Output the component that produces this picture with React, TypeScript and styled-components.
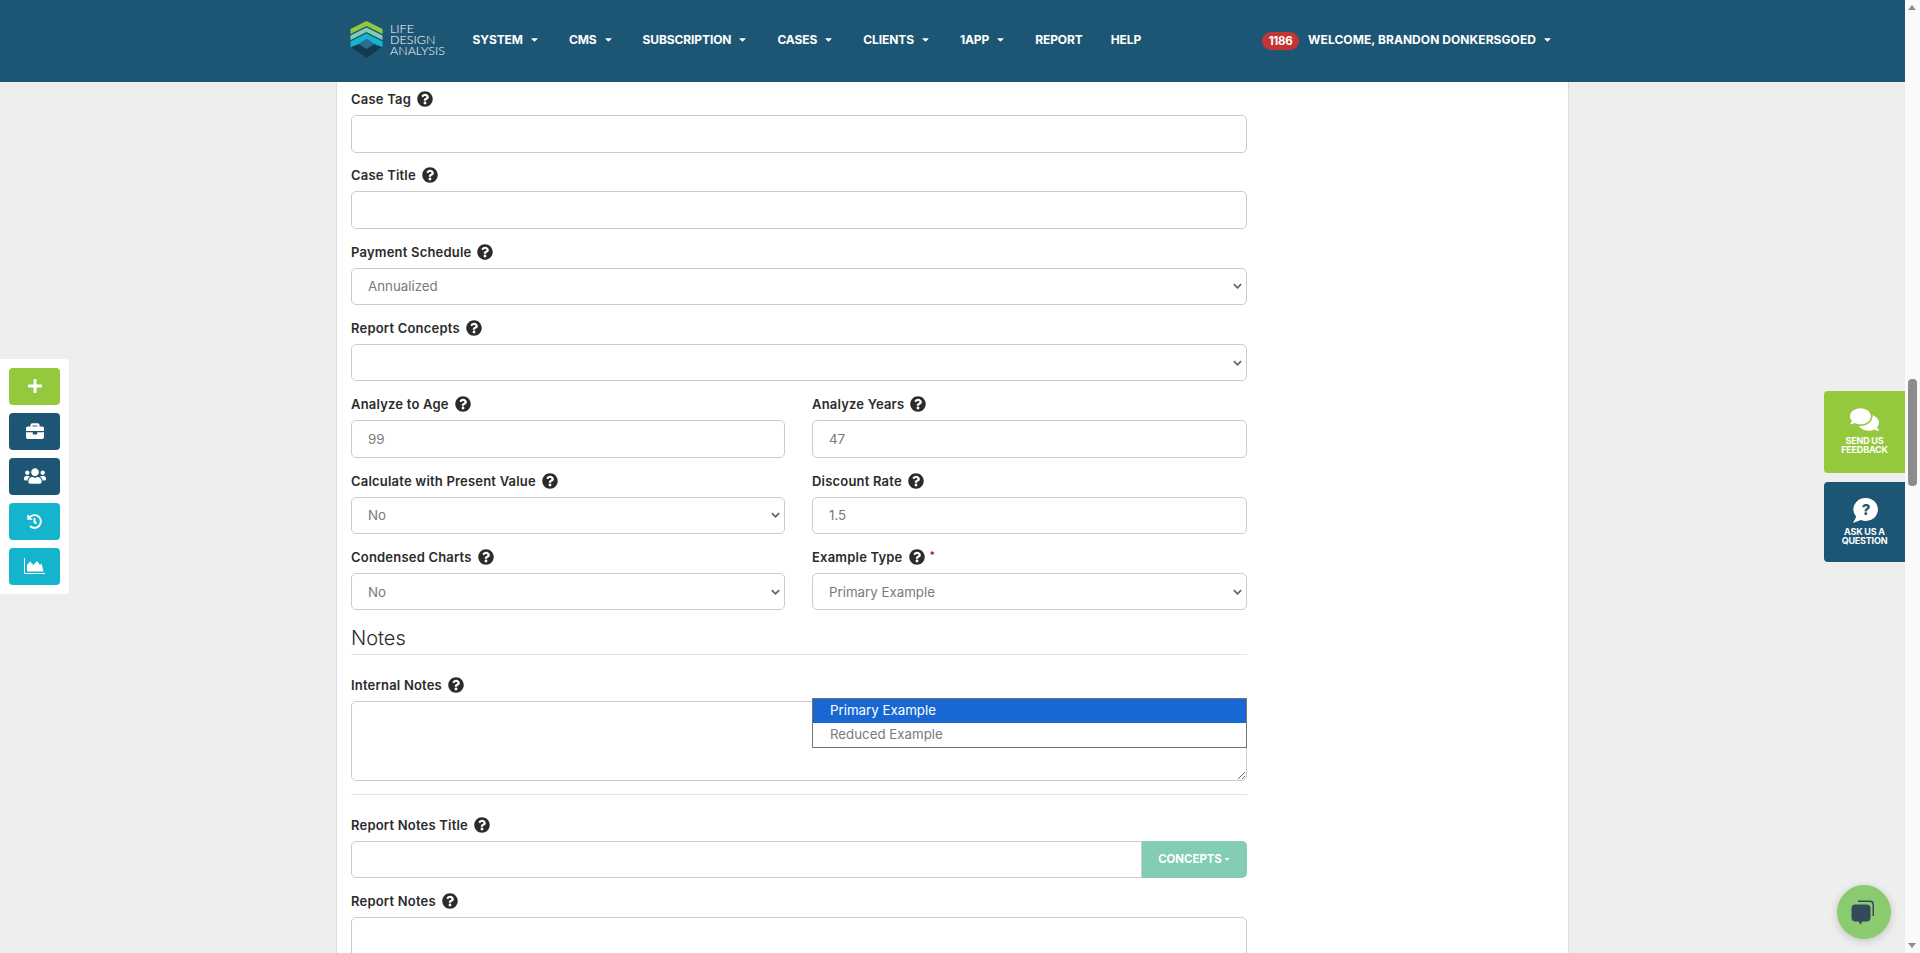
import React from 'react'
import styled, { createGlobalStyle } from 'styled-components'
import {
    FaBriefcase,
    FaCaretDown,
    FaComments,
    FaHistory,
    FaPlus,
    FaQuestionCircle,
    FaUsers,
} from 'react-icons/fa'

const FONT = `Inter, "Liberation Sans", sans-serif`
const CHEVRON = `url("data:image/svg+xml,%3Csvg xmlns='http://www.w3.org/2000/svg' width='9' height='6' viewBox='0 0 10 6'%3E%3Cpath d='M1 1l4 4 4-4' fill='none' stroke='%23666' stroke-width='2'/%3E%3C/svg%3E")`

const GlobalStyle = createGlobalStyle`
    html, body {
        margin: 0;
        height: 100%;
        overflow: hidden;
        background: #eeeeee;
        font-family: ${FONT};
    }
    * {
        box-sizing: border-box;
    }
`
const Page = styled.div`
    display: flex;
    height: 100vh;
    overflow: hidden;
`
const Main = styled.div`
    position: relative;
    flex: 1;
    min-width: 0;
    overflow: hidden;
`
const Header = styled.header`
    height: 82px;
    background: #1d5674;
`
const HeaderInner = styled.div`
    display: flex;
    align-items: center;
    width: 1233px;
    height: 100%;
    margin: 0 auto;
    padding-left: 14px;
`
const Logo = styled.div`
    display: flex;
    align-items: center;
    gap: 7px;
    width: 108.5px;
    margin-bottom: 3px;
`
const LogoText = styled.div`
    font-family: Lato, sans-serif;
    font-size: 12.5px;
    font-weight: 300;
    line-height: 11px;
    color: #ffffff;
`
const NavItem = styled.a`
    display: flex;
    align-items: center;
    gap: 6px;
    padding: 0 14px;
    margin-bottom: 4px;
    font-size: 12px;
    font-weight: 700;
    letter-spacing: -0.1px;
    color: #ffffff;
    white-space: nowrap;
`
const NavCaret = styled(FaCaretDown)`
    margin-right: 1px;
`
const UserMenu = styled.div`
    display: flex;
    align-items: center;
    margin-left: auto;
`
const Badge = styled.span`
    display: flex;
    align-items: center;
    justify-content: center;
    width: 37px;
    height: 18px;
    border-radius: 9px;
    background: #c53434;
    font-size: 11.5px;
    font-weight: 700;
    letter-spacing: -0.3px;
    color: #ffffff;
`
const UserLink = styled(NavItem)`
    padding: 0 15px 0 9px;
    letter-spacing: 0.07px;
`
const Panel = styled.div`
    width: 1233px;
    height: 871px;
    margin: 0 auto;
    padding: 7px 14px 0;
    background: #ffffff;
    border-left: 1px solid #dddddd;
    border-right: 1px solid #dddddd;
`
const Form = styled.form`
    width: 896px;
`
const Field = styled.div`
    position: relative;
    min-width: 0;
    margin-bottom: 12.83px;
`
const Columns = styled.div`
    display: grid;
    grid-template-columns: 434px 435px;
    column-gap: 27px;
`
const Label = styled.label`
    display: flex;
    align-items: center;
    gap: 6px;
    height: 20px;
    margin-bottom: 6px;
    font-size: 13px;
    font-weight: 600;
    letter-spacing: 0.2px;
    color: #2b2b2b;
`
const Required = styled.span`
    margin: -3px 0 0 -1px;
    font-size: 10px;
    color: #a0152c;
`
const controlStyles = `
    display: block;
    width: 100%;
    height: 37.5px;
    padding: 0 16px;
    border: 1px solid #cccccc;
    border-radius: 5px;
    outline: none;
    background-color: #ffffff;
    font-family: ${FONT};
    font-size: 13.3px;
    color: #7a7a7a;
`
const Input = styled.input`
    ${controlStyles}
`
const Select = styled.select`
    ${controlStyles}
    appearance: none;
    background-image: ${CHEVRON};
    background-repeat: no-repeat;
    background-position: right 4.5px center;
`
const TextArea = styled.textarea<{ $height: number }>`
    ${controlStyles}
    height: ${(p) => p.$height}px;
    resize: vertical;
`
const SectionTitle = styled.h4`
    height: 32px;
    margin: 0 0 20px;
    border-bottom: 1px solid #e2e2e2;
    font-size: 20px;
    font-weight: 300;
    line-height: 30px;
    color: #2b2b2b;
`
const Rule = styled.hr`
    height: 1px;
    margin: 0 0 20px;
    border: 0;
    background: #e2e2e2;
`
const OptionList = styled.div`
    position: absolute;
    top: 151px;
    left: 0;
    right: 0;
    z-index: 2;
    border: 1px solid #767676;
    background: #ffffff;
`
const Option = styled.div<{ $selected?: boolean }>`
    height: 24px;
    padding-left: 17px;
    font-size: 13.3px;
    line-height: 23px;
    color: ${(p) => (p.$selected ? '#ffffff' : '#7a7a7a')};
    background: ${(p) => (p.$selected ? '#1967d2' : 'transparent')};
`
const InputGroup = styled.div`
    display: flex;
`
const GroupInput = styled(Input)`
    flex: 1;
    border-radius: 5px 0 0 5px;
`
const ConceptsButton = styled.button`
    display: flex;
    align-items: center;
    justify-content: center;
    gap: 1px;
    width: 105px;
    padding: 0;
    border: 0;
    border-radius: 0 5px 5px 0;
    background: #82cdb3;
    font-family: ${FONT};
    font-size: 11.4px;
    font-weight: 700;
    color: #ffffff;
`
const ToolDock = styled.div`
    position: absolute;
    top: 359px;
    left: 0;
    display: flex;
    flex-direction: column;
    gap: 8.5px;
    width: 69px;
    padding: 9px;
    border-radius: 0 4px 4px 0;
    background: #ffffff;
`
const ToolButton = styled.button<{ $color: string }>`
    display: flex;
    align-items: center;
    justify-content: center;
    width: 51px;
    height: 36.5px;
    padding: 0;
    border: 0;
    border-radius: 4px;
    background: ${(p) => p.$color};
    color: #ffffff;
    font-size: 18px;
`
const SideTabs = styled.div`
    position: absolute;
    top: 391px;
    right: 0;
    display: flex;
    flex-direction: column;
    gap: 9.5px;
    width: 81px;
`
const SideTab = styled.div<{ $color: string; $height: number }>`
    display: flex;
    flex-direction: column;
    align-items: center;
    height: ${(p) => p.$height}px;
    padding-top: 16px;
    border-radius: 4px 0 0 4px;
    background: ${(p) => p.$color};
    color: #ffffff;
    font-size: 9px;
    font-weight: 700;
    line-height: 9px;
    letter-spacing: -0.2px;
    text-align: center;
`
const TabIcon = styled.span`
    display: flex;
    align-items: center;
    justify-content: center;
    height: 25px;
    margin-bottom: 4px;
    font-size: 29px;
`
const ChatBubble = styled.div`
    position: absolute;
    right: 14px;
    bottom: 14px;
    display: flex;
    align-items: center;
    justify-content: center;
    width: 54px;
    height: 54px;
    border-radius: 50%;
    background: #8acb70;
    box-shadow: 0 2px 8px rgba(0, 0, 0, 0.18);
`
const ScrollTrack = styled.div`
    position: relative;
    flex: 0 0 15px;
    background: #fafafa;
`
const ScrollThumb = styled.div`
    position: absolute;
    top: 379px;
    left: 3px;
    width: 9px;
    height: 107px;
    border-radius: 4px;
    background: #8c8c8c;
`
const ScrollArrow = styled.div<{ $down?: boolean }>`
    position: absolute;
    left: 3px;
    ${(p) => (p.$down ? 'bottom: 5px;' : 'top: 5px;')}
    width: 0;
    height: 0;
    border-left: 4.5px solid transparent;
    border-right: 4.5px solid transparent;
    ${(p) =>
        p.$down
            ? 'border-top: 5px solid #8c8c8c;'
            : 'border-bottom: 5px solid #8c8c8c;'}
`

const NAV_ITEMS = [
    { name: 'SYSTEM', menu: true },
    { name: 'CMS', menu: true },
    { name: 'SUBSCRIPTION', menu: true },
    { name: 'CASES', menu: true },
    { name: 'CLIENTS', menu: true },
    { name: '1APP', menu: true },
    { name: 'REPORT', menu: false },
    { name: 'HELP', menu: false },
]

function AreaChartIcon() {
    return (
        <svg width="21" height="16" viewBox="0 0 21 16">
            <path d="M.5 0v15.5H21" fill="none" stroke="#ffffff" />
            <path
                d="M3 13.5V7l3-3.5L9.5 7 13 3l3 4 1.5-1.5 2 8z"
                fill="#ffffff"
            />
        </svg>
    )
}

const TOOLS = [
    { color: '#95c93d', icon: <FaPlus size={16} /> },
    { color: '#1d5674', icon: <FaBriefcase /> },
    { color: '#1d5674', icon: <FaUsers size={22} /> },
    { color: '#14b5cc', icon: <FaHistory size={15} /> },
    { color: '#14b5cc', icon: <AreaChartIcon /> },
]

function LogoMark() {
    return (
        <svg width="33" height="37" viewBox="0 0 32 37">
            <path d="M0 8L16 0l16 8v5L16 5 0 13z" fill="#95c93d" />
            <path d="M0 14.5l16-8 16 8V19l-16-8-16 8z" fill="#82cdb3" />
            <path
                d="M0 20.5l16-8 16 8V26l-8-3-8-5-8 5-8 3z"
                fill="#14b5cc"
            />
            <path d="M16 18l8 5-8 5-8-5z" fill="#2a6f91" />
            <path
                d="M1 26.5l7-3 8 4.5 8-4.5 7 3L16 37z"
                fill="#123a50"
            />
        </svg>
    )
}

function FieldLabel({
    children,
    required,
}: {
    children: React.ReactNode
    required?: boolean
}) {
    return (
        <Label>
            {children}
            <FaQuestionCircle size={16} />
            {required && <Required>*</Required>}
        </Label>
    )
}

export default function App() {
    return (
        <Page>
            <GlobalStyle />
            <Main>
                <Header>
                    <HeaderInner>
                        <Logo>
                            <LogoMark />
                            <LogoText>
                                LIFE
                                <br />
                                DESIGN
                                <br />
                                ANALYSIS
                            </LogoText>
                        </Logo>
                        {NAV_ITEMS.map((item) => (
                            <NavItem key={item.name}>
                                {item.name}
                                {item.menu && <NavCaret size={11} />}
                            </NavItem>
                        ))}
                        <UserMenu>
                            <Badge>1186</Badge>
                            <UserLink>
                                WELCOME, BRANDON DONKERSGOED
                                <NavCaret size={11} />
                            </UserLink>
                        </UserMenu>
                    </HeaderInner>
                </Header>
                <Panel>
                    <Form>
                        <Field>
                            <FieldLabel>Case Tag</FieldLabel>
                            <Input />
                        </Field>
                        <Field>
                            <FieldLabel>Case Title</FieldLabel>
                            <Input />
                        </Field>
                        <Field>
                            <FieldLabel>Payment Schedule</FieldLabel>
                            <Select defaultValue="Annualized">
                                <option>Annualized</option>
                            </Select>
                        </Field>
                        <Field>
                            <FieldLabel>Report Concepts</FieldLabel>
                            <Select />
                        </Field>
                        <Columns>
                            <Field>
                                <FieldLabel>Analyze to Age</FieldLabel>
                                <Input defaultValue="99" />
                            </Field>
                            <Field>
                                <FieldLabel>Analyze Years</FieldLabel>
                                <Input defaultValue="47" />
                            </Field>
                            <Field>
                                <FieldLabel>
                                    Calculate with Present Value
                                </FieldLabel>
                                <Select defaultValue="No">
                                    <option>No</option>
                                </Select>
                            </Field>
                            <Field>
                                <FieldLabel>Discount Rate</FieldLabel>
                                <Input defaultValue="1.5" />
                            </Field>
                            <Field>
                                <FieldLabel>Condensed Charts</FieldLabel>
                                <Select defaultValue="No">
                                    <option>No</option>
                                </Select>
                            </Field>
                            <Field>
                                <FieldLabel required>Example Type</FieldLabel>
                                <Select defaultValue="Primary Example">
                                    <option>Primary Example</option>
                                </Select>
                                <OptionList>
                                    <Option $selected>Primary Example</Option>
                                    <Option>Reduced Example</Option>
                                </OptionList>
                            </Field>
                        </Columns>
                        <SectionTitle>Notes</SectionTitle>
                        <Field>
                            <FieldLabel>Internal Notes</FieldLabel>
                            <TextArea $height={79.5} />
                        </Field>
                        <Rule />
                        <Field>
                            <FieldLabel>Report Notes Title</FieldLabel>
                            <InputGroup>
                                <GroupInput />
                                <ConceptsButton type="button">
                                    CONCEPTS
                                    <FaCaretDown size={8} />
                                </ConceptsButton>
                            </InputGroup>
                        </Field>
                        <Field>
                            <FieldLabel>Report Notes</FieldLabel>
                            <TextArea $height={120} />
                        </Field>
                    </Form>
                </Panel>
                <ToolDock>
                    {TOOLS.map((tool, i) => (
                        <ToolButton key={i} $color={tool.color} type="button">
                            {tool.icon}
                        </ToolButton>
                    ))}
                </ToolDock>
                <SideTabs>
                    <SideTab $color="#95c93d" $height={81.5}>
                        <TabIcon>
                            <FaComments />
                        </TabIcon>
                        SEND US
                        <br />
                        FEEDBACK
                    </SideTab>
                    <SideTab $color="#1d5674" $height={80}>
                        <TabIcon>
                            <svg width="26" height="25" viewBox="0 0 26 25">
                                <path
                                    d="M14 0a12 11.5 0 1 1-5.2 21.9L1 25l3.2-6.2A12 11.5 0 0 1 14 0z"
                                    fill="#ffffff"
                                />
                                <text
                                    x="14"
                                    y="17"
                                    fontFamily="Inter, sans-serif"
                                    fontSize="15"
                                    fontWeight="800"
                                    textAnchor="middle"
                                    fill="#1d5674"
                                >
                                    ?
                                </text>
                            </svg>
                        </TabIcon>
                        ASK US A
                        <br />
                        QUESTION
                    </SideTab>
                </SideTabs>
                <ChatBubble>
                    <svg width="28" height="28" viewBox="0 0 28 28">
                        <path
                            d="M8 2.5h12a4 4 0 0 1 4 4v11.5h-1.5V7a3 3 0 0 0-3-3H8z"
                            fill="#34495e"
                        />
                        <path
                            d="M5.5 6.5h11a4 4 0 0 1 4 4v9a4 4 0 0 1-4 4h-4l-2 3-2-3h-3a4 4 0 0 1-4-4v-9a4 4 0 0 1 4-4z"
                            fill="#34495e"
                        />
                    </svg>
                </ChatBubble>
            </Main>
            <ScrollTrack>
                <ScrollArrow />
                <ScrollThumb />
                <ScrollArrow $down />
            </ScrollTrack>
        </Page>
    )
}
